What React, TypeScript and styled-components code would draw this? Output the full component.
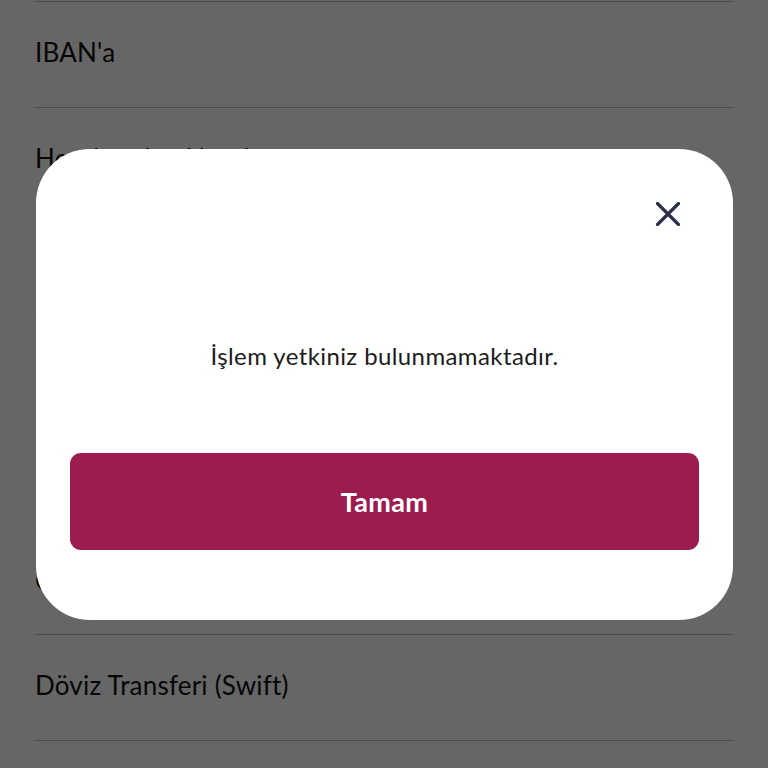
import React from 'react'
import styled, { createGlobalStyle } from 'styled-components'

const GlobalStyle = createGlobalStyle`
  html, body {
    margin: 0;
    padding: 0;
    background: #ffffff;
    font-family: 'Lato', 'Noto Sans', sans-serif;
  }
`

const Page = styled.div`
  width: 768px;
  height: 768px;
  overflow: hidden;
  position: relative;
  background: #ffffff;
`

const List = styled.ul`
  list-style: none;
  margin: 0;
  padding: 1px 35px 0;
`

const Row = styled.li`
  box-sizing: border-box;
  height: 105.5px;
  border-top: 1px solid #bdbdbd;
  display: flex;
  align-items: center;
  padding-bottom: 4px;
  font-size: 26px;
  color: #111111;
  letter-spacing: 0.2px;
`

const Overlay = styled.div`
  position: absolute;
  inset: 0;
  background: rgba(0, 0, 0, 0.6);
  display: flex;
  align-items: center;
  justify-content: center;
`

const Modal = styled.div`
  box-sizing: border-box;
  width: 697px;
  margin-left: 1px;
  background: #ffffff;
  border-radius: 54px;
  padding: 48px 34px 70px;
  display: flex;
  flex-direction: column;
`

const CloseRow = styled.div`
  display: flex;
  justify-content: flex-end;
`

const CloseButton = styled.button`
  width: 34px;
  height: 34px;
  margin-right: 14px;
  padding: 0;
  border: none;
  background: none;
  display: flex;
  align-items: center;
  justify-content: center;
  cursor: pointer;
`

const Message = styled.p`
  margin: 110px 0 0;
  text-align: center;
  font-size: 24px;
  line-height: 30px;
  color: #1c1c1c;
  letter-spacing: 0.4px;
`

const PrimaryButton = styled.button`
  margin-top: 82px;
  height: 97px;
  border: none;
  border-radius: 11px;
  background: #9d1c4f;
  color: #ffffff;
  font-family: 'Lato', 'Noto Sans', sans-serif;
  font-weight: 700;
  font-size: 27px;
  letter-spacing: 0.3px;
  cursor: pointer;
`

const items = [
  "IBAN'a",
  'Hesabımdan Hesabıma',
  'Kredi Kartına',
  'Fatura Ödeme',
  'Düzenli Ödemeler',
  'Cep Telefonuna',
  'Döviz Transferi (Swift)',
]

export default function App() {
  return (
    <Page>
      <GlobalStyle />
      <List>
        {items.map(item => (
          <Row key={item}>{item}</Row>
        ))}
        <Row />
      </List>
      <Overlay>
        <Modal>
          <CloseRow>
            <CloseButton aria-label="Kapat">
              <svg width="24" height="24" viewBox="0 0 24 24" fill="none">
                <path
                  d="M1.5 1.5 L22.5 22.5 M22.5 1.5 L1.5 22.5"
                  stroke="#2c2f48"
                  strokeWidth="3.2"
                  strokeLinecap="round"
                />
              </svg>
            </CloseButton>
          </CloseRow>
          <Message>İşlem yetkiniz bulunmamaktadır.</Message>
          <PrimaryButton>Tamam</PrimaryButton>
        </Modal>
      </Overlay>
    </Page>
  )
}
